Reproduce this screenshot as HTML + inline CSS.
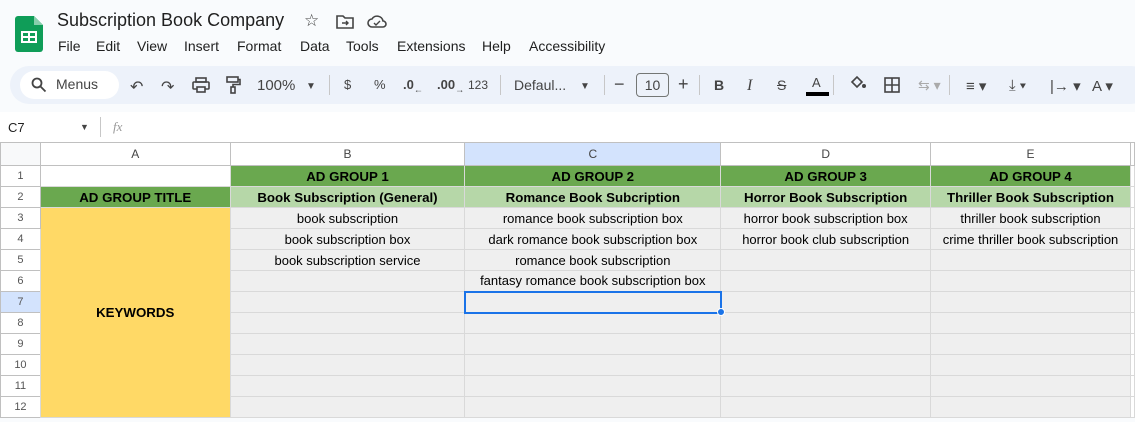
<!DOCTYPE html>
<html><head><meta charset="utf-8"><style>
*{box-sizing:border-box;margin:0;padding:0}
body{width:1135px;height:422px;overflow:hidden;background:#f9fbfd;font-family:"Liberation Sans",Arial,sans-serif;position:relative;color:#1f1f1f}
.abs{position:absolute}
.menu span{position:absolute;top:0}
.tb{position:absolute;top:66px;left:10px;width:1140px;height:38px;background:#edf2fa;border-radius:20px}
.t{position:absolute;top:77px;font-size:14px;color:#444}
.sep{position:absolute;top:75px;width:1px;height:20px;background:#c7c7c7}
table{position:absolute;top:142px;left:0;border-collapse:collapse;table-layout:fixed;font-size:13px}
td{border:1px solid #d9d9d9;height:21px;text-align:center;padding:0;white-space:nowrap;overflow:hidden;background:#efefef;color:#000}
tr.h td{height:23px;background:#fff;color:#444;font-size:12px;border-color:#c0c0c0}
td.rh{background:#fff;color:#555;font-size:11px;border-color:#c0c0c0}
.g{background:#6aa84f!important;font-weight:bold;font-size:13.3px}
.lg{background:#b6d7a8!important;font-weight:bold;font-size:13.3px}
.y{background:#ffd966!important;font-weight:bold;font-size:13.3px}
</style></head><body>
<div class="abs" style="top:0;left:0;width:1135px;height:142px;background:#f9fbfd"></div>
<svg class="abs" style="left:15px;top:16px" width="28" height="36" viewBox="0 0 28 36"><path d="M3 0h16l9 9v24a3 3 0 0 1-3 3H3a3 3 0 0 1-3-3V3a3 3 0 0 1 3-3z" fill="#0f9d58"/><path d="M19 0v9h9z" fill="#87ceac"/><rect x="6" y="15" width="16" height="12" fill="#fff"/><rect x="8" y="17" width="5" height="3" fill="#0f9d58"/><rect x="15" y="17" width="5" height="3" fill="#0f9d58"/><rect x="8" y="22" width="5" height="3" fill="#0f9d58"/><rect x="15" y="22" width="5" height="3" fill="#0f9d58"/></svg>
<div class="abs" style="left:57px;top:10px;font-size:18px;color:#1f1f1f">Subscription Book Company</div>
<div class="abs" style="left:304px;top:11px;font-size:17px;color:#444">☆</div>
<svg class="abs" style="left:336px;top:14px" width="18" height="15"><path d="M1 2h6l2 2h8v10H1z" fill="none" stroke="#444" stroke-width="1.6"/><path d="M6 9h6M10 7l2 2-2 2" stroke="#444" stroke-width="1.4" fill="none"/></svg>
<svg class="abs" style="left:367px;top:14px" width="20" height="15"><path d="M5 13a4 4 0 0 1 0-8 6 6 0 0 1 11 2 3 3 0 0 1 0 6z" fill="none" stroke="#444" stroke-width="1.6"/><path d="M7 9l2 2 4-4" stroke="#444" stroke-width="1.4" fill="none"/></svg>
<div class="abs menu" style="left:0;top:38px;font-size:14px;color:#1f1f1f"><span style="left:58px">File</span><span style="left:96px">Edit</span><span style="left:137px">View</span><span style="left:184px">Insert</span><span style="left:237px">Format</span><span style="left:300px">Data</span><span style="left:346px">Tools</span><span style="left:397px">Extensions</span><span style="left:482px">Help</span><span style="left:529px">Accessibility</span></div>
<div class="tb"></div>
<div class="abs" style="left:20px;top:71px;width:99px;height:28px;background:#fff;border-radius:14px"></div>
<svg class="abs" style="left:31px;top:77px" width="16" height="16"><circle cx="6" cy="6" r="4.5" fill="none" stroke="#444" stroke-width="1.8"/><path d="M9.5 9.5l5 5" stroke="#444" stroke-width="1.8"/></svg>
<div class="t" style="left:56px;top:76px">Menus</div>
<div class="t" style="left:130px;font-size:16px">↶</div>
<div class="t" style="left:161px;font-size:16px">↷</div>
<svg class="abs" style="left:192px;top:77px" width="18" height="16"><rect x="4" y="1" width="10" height="4" fill="none" stroke="#444" stroke-width="1.6"/><rect x="1" y="5" width="16" height="7" rx="1" fill="none" stroke="#444" stroke-width="1.6"/><rect x="5" y="10" width="8" height="5" fill="#edf2fa" stroke="#444" stroke-width="1.6"/></svg>
<svg class="abs" style="left:225px;top:76px" width="16" height="18"><rect x="2" y="1" width="11" height="5" fill="none" stroke="#444" stroke-width="1.6"/><path d="M13 3.5h2v5H8v3" fill="none" stroke="#444" stroke-width="1.6"/><rect x="6" y="11" width="4" height="6" fill="none" stroke="#444" stroke-width="1.6"/></svg>
<div class="t" style="left:257px;font-size:15px">100%</div>
<div class="t" style="left:306px;font-size:10px;top:81px">▼</div>
<div class="sep" style="left:329px"></div>
<div class="t" style="left:344px;font-size:13px">$</div>
<div class="t" style="left:374px;font-size:13px">%</div>
<div class="t" style="left:403px;font-size:13px;font-weight:bold">.0<sub style="font-size:9px">←</sub></div>
<div class="t" style="left:437px;font-size:13px;font-weight:bold">.00<sub style="font-size:9px">→</sub></div>
<div class="t" style="left:468px;font-size:12px;top:78px">123</div>
<div class="sep" style="left:500px"></div>
<div class="t" style="left:514px;font-size:14px">Defaul...</div>
<div class="t" style="left:580px;font-size:10px;top:81px">▼</div>
<div class="sep" style="left:604px"></div>
<div class="t" style="left:614px;font-size:18px;top:74px">−</div>
<div class="abs" style="left:636px;top:73px;width:33px;height:24px;border:1px solid #747775;border-radius:4px;font-size:14px;text-align:center;line-height:22px;color:#444">10</div>
<div class="t" style="left:678px;font-size:18px;top:74px">+</div>
<div class="sep" style="left:699px"></div>
<div class="t" style="left:714px;font-weight:bold">B</div>
<div class="t" style="left:747px;font-style:italic;font-family:'Liberation Serif',serif;font-size:16px">I</div>
<div class="t" style="left:777px;text-decoration:line-through">S</div>
<div class="t" style="left:812px;font-size:13px;top:75px">A</div>
<div class="abs" style="left:806px;top:92px;width:23px;height:4px;background:#000"></div>
<div class="sep" style="left:833px"></div>
<svg class="abs" style="left:849px;top:75px" width="18" height="16"><path d="M3 7l5-5 5 5-5 5z" fill="none" stroke="#444" stroke-width="1.6"/><circle cx="15" cy="11" r="2" fill="#444"/></svg>
<svg class="abs" style="left:884px;top:77px" width="17" height="17"><rect x="1" y="1" width="14" height="14" fill="none" stroke="#444" stroke-width="1.6"/><path d="M8 1v14M1 8h14" stroke="#444" stroke-width="1.6"/></svg>
<div class="t" style="left:918px;color:#aaa">⇆ ▾</div>
<div class="sep" style="left:949px"></div>
<div class="t" style="left:966px;font-size:15px">≡ ▾</div>
<div class="t" style="left:1009px;font-size:15px">⤓ ▾</div>
<div class="t" style="left:1050px;font-size:15px">|→ ▾</div>
<div class="t" style="left:1092px;font-size:15px">A ▾</div>
<div class="abs" style="left:0;top:112px;width:1135px;height:30px;background:#fff"></div>
<div class="abs" style="left:8px;top:120px;font-size:13px;color:#1f1f1f">C7</div>
<div class="abs" style="left:80px;top:122px;font-size:9px;color:#444">▼</div>
<div class="abs" style="left:100px;top:117px;width:1px;height:20px;background:#c7c7c7"></div>
<div class="abs" style="left:113px;top:119px;font-size:13px;color:#999;font-style:italic;font-family:'Liberation Serif',serif">fx</div>
<table>
<colgroup><col style="width:40px"><col style="width:190px"><col style="width:235px"><col style="width:256px"><col style="width:210px"><col style="width:200px"><col style="width:4px"></colgroup>
<tr class="h"><td style="background:#f8f9fa"></td><td>A</td><td>B</td><td style="background:#d3e3fd">C</td><td>D</td><td>E</td><td></td></tr>
<tr><td class="rh">1</td><td style="background:#fff"></td><td class="g">AD GROUP 1</td><td class="g">AD GROUP 2</td><td class="g">AD GROUP 3</td><td class="g">AD GROUP 4</td><td style="background:#fff"></td></tr>
<tr><td class="rh">2</td><td class="g">AD GROUP TITLE</td><td class="lg">Book Subscription (General)</td><td class="lg">Romance Book Subcription</td><td class="lg">Horror Book Subscription</td><td class="lg">Thriller Book Subscription</td><td style="background:#fff"></td></tr>
<tr><td class="rh">3</td><td class="y" rowspan="10">KEYWORDS</td><td>book subscription</td><td>romance book subscription box</td><td>horror book subscription box</td><td>thriller book subscription</td><td style="background:#fff"></td></tr>
<tr><td class="rh">4</td><td>book subscription box</td><td>dark romance book subscription box</td><td>horror book club subscription</td><td>crime thriller book subscription</td><td style="background:#fff"></td></tr>
<tr><td class="rh">5</td><td>book subscription service</td><td>romance book subscription</td><td></td><td></td><td style="background:#fff"></td></tr>
<tr><td class="rh">6</td><td></td><td>fantasy romance book subscription box</td><td></td><td></td><td style="background:#fff"></td></tr>
<tr><td class="rh" style="background:#d3e3fd">7</td><td></td><td style="border:2px solid #1a73e8"></td><td></td><td></td><td style="background:#fff"></td></tr>
<tr><td class="rh">8</td><td></td><td></td><td></td><td></td><td style="background:#fff"></td></tr>
<tr><td class="rh">9</td><td></td><td></td><td></td><td></td><td style="background:#fff"></td></tr>
<tr><td class="rh">10</td><td></td><td></td><td></td><td></td><td style="background:#fff"></td></tr>
<tr><td class="rh">11</td><td></td><td></td><td></td><td></td><td style="background:#fff"></td></tr>
<tr><td class="rh">12</td><td></td><td></td><td></td><td></td><td style="background:#fff"></td></tr>
</table>
<div class="abs" style="left:717px;top:308px;width:8px;height:8px;border-radius:50%;background:#1a73e8;border:1px solid #fff"></div>
</body></html>
